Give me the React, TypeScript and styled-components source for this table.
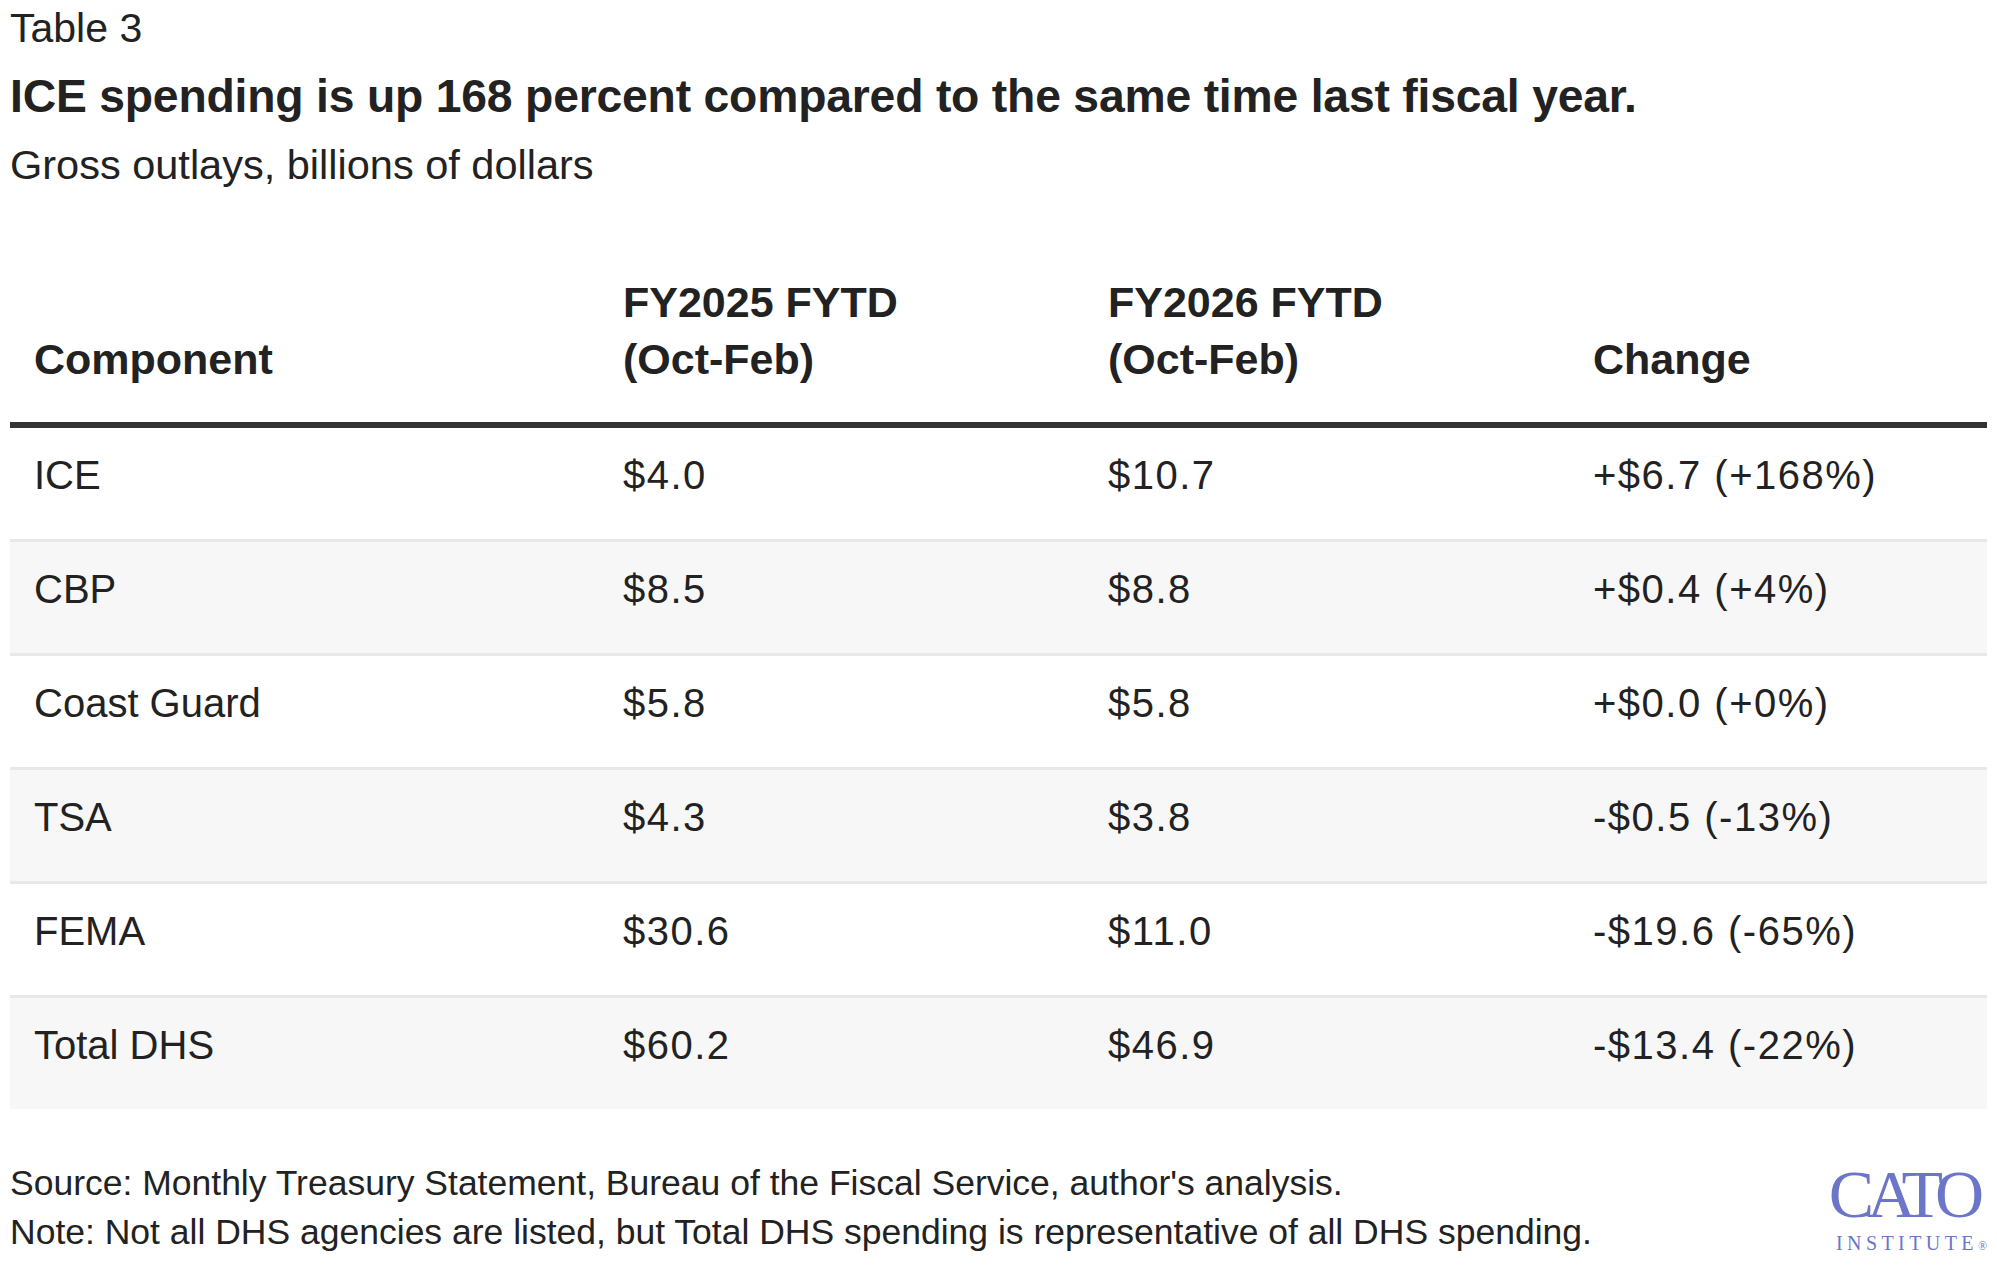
import { styled, createGlobalStyle } from 'styled-components'

type Row = {
  component: string
  fy2025: string
  fy2026: string
  change: string
}

const rows: Row[] = [
  { component: 'ICE', fy2025: '$4.0', fy2026: '$10.7', change: '+$6.7 (+168%)' },
  { component: 'CBP', fy2025: '$8.5', fy2026: '$8.8', change: '+$0.4 (+4%)' },
  { component: 'Coast Guard', fy2025: '$5.8', fy2026: '$5.8', change: '+$0.0 (+0%)' },
  { component: 'TSA', fy2025: '$4.3', fy2026: '$3.8', change: '-$0.5 (-13%)' },
  { component: 'FEMA', fy2025: '$30.6', fy2026: '$11.0', change: '-$19.6 (-65%)' },
  { component: 'Total DHS', fy2025: '$60.2', fy2026: '$46.9', change: '-$13.4 (-22%)' },
]

export default function App() {
  return (
    <>
      <GlobalStyle />
      <Page>
        <Label>Table 3</Label>
        <Title>ICE spending is up 168 percent compared to the same time last fiscal year.</Title>
        <Subtitle>Gross outlays, billions of dollars</Subtitle>

        <Table>
          <HeaderRow>
            <HeadCell>Component</HeadCell>
            <HeadCell>
              FY2025 FYTD
              <br />
              (Oct-Feb)
            </HeadCell>
            <HeadCell>
              FY2026 FYTD
              <br />
              (Oct-Feb)
            </HeadCell>
            <HeadCell>Change</HeadCell>
          </HeaderRow>
          {rows.map((r, i) => (
            <BodyRow key={r.component} $shaded={i % 2 === 1} $first={i === 0}>
              <Cell>{r.component}</Cell>
              <Cell $numeric>{r.fy2025}</Cell>
              <Cell $numeric>{r.fy2026}</Cell>
              <Cell $numeric>{r.change}</Cell>
            </BodyRow>
          ))}
        </Table>

        <Footer>
          <Notes>
            <div>Source: Monthly Treasury Statement, Bureau of the Fiscal Service, author's analysis.</div>
            <div>Note: Not all DHS agencies are listed, but Total DHS spending is representative of all DHS spending.</div>
          </Notes>
          <Logo>
            <LogoMain>CATO</LogoMain>
            <LogoSub>
              INSTITUTE<Registered>®</Registered>
            </LogoSub>
          </Logo>
        </Footer>
      </Page>
    </>
  )
}

const GlobalStyle = createGlobalStyle`
  html, body {
    margin: 0;
    padding: 0;
    background: #ffffff;
  }
  body {
    font-family: "Liberation Sans", Arial, sans-serif;
    color: #222222;
  }
`

const Page = styled.div`
  width: 1977px;
  padding: 4px 10px 0;
  display: flex;
  flex-direction: column;
`

const Label = styled.div`
  font-size: 41px;
  line-height: 48px;
  color: #222;
`

const Title = styled.h1`
  margin: 17px 0 0;
  font-size: 46.3px;
  line-height: 54px;
  font-weight: 700;
  color: #222;
  letter-spacing: -0.2px;
`

const Subtitle = styled.div`
  margin-top: 18px;
  font-size: 41.5px;
  line-height: 48px;
  color: #222;
`

const Table = styled.div`
  margin-top: 85px;
  display: flex;
  flex-direction: column;
`

const columns = '589px 485px 485px 1fr'

const HeaderRow = styled.div`
  display: grid;
  grid-template-columns: ${columns};
  align-items: end;
  padding-bottom: 34px;
  border-bottom: 6px solid #333333;
`

const HeadCell = styled.div`
  padding-left: 24px;
  font-size: 43px;
  line-height: 57px;
  font-weight: 700;
  color: #222;
`

const BodyRow = styled.div<{ $shaded: boolean; $first: boolean }>`
  display: grid;
  grid-template-columns: ${columns};
  height: 111px;
  box-sizing: content-box;
  border-top: ${({ $first }) => ($first ? 'none' : '3px solid #e8e8e8')};
  background-color: ${({ $shaded }) => ($shaded ? '#f7f7f7' : '#ffffff')};
`

const Cell = styled.div<{ $numeric?: boolean }>`
  padding: 24px 0 0 24px;
  font-size: 40px;
  line-height: 47px;
  letter-spacing: ${({ $numeric }) => ($numeric ? '1.5px' : '0')};
  color: #222;
`

const Footer = styled.div`
  margin-top: 50px;
  display: flex;
  justify-content: space-between;
  align-items: flex-end;
`

const Notes = styled.div`
  font-size: 35.5px;
  line-height: 49px;
  color: #222;
`

const Logo = styled.div`
  display: flex;
  flex-direction: column;
  align-items: flex-end;
  font-family: "Liberation Serif", "Times New Roman", serif;
  color: #6b76c8;
  margin-bottom: 3px;
`

const LogoMain = styled.div`
  font-size: 68px;
  line-height: 50px;
  letter-spacing: -7px;
  padding-right: 10px;
`

const LogoSub = styled.div`
  font-size: 20px;
  line-height: 16px;
  letter-spacing: 4.4px;
  margin-top: 16px;
`

const Registered = styled.span`
  font-size: 12px;
  letter-spacing: 0;
`
